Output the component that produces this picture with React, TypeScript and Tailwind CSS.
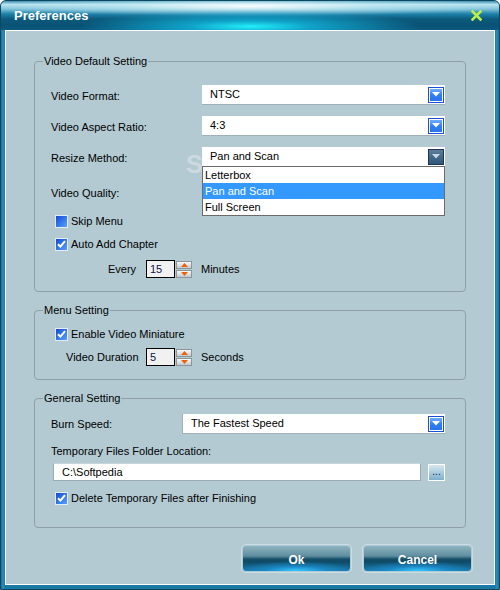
import React from "react";

function Arrow({ pressed }: { pressed?: boolean }) {
  return (
    <div
      className={
        pressed
          ? "mr-[1px] flex h-[16px] w-[16px] items-center justify-center border border-[#1f3552] bg-[linear-gradient(#5a7d9c,#2e5678)]"
          : "mr-[1px] flex h-[16px] w-[16px] items-center justify-center border border-[#1c4fd6] bg-[linear-gradient(#79b4ff,#2f7cf0_55%,#2a72ea)] shadow-[inset_0_0_0_1px_#ffffff]"
      }
    >
      <svg width="8" height="5" viewBox="0 0 8 5">
        <path d="M0 0H8L4 4.5Z" fill={pressed ? "#c9d6e2" : "#ffffff"} />
      </svg>
    </div>
  );
}

function Select({
  value,
  className,
  pressed,
  children,
}: {
  value: string;
  className: string;
  pressed?: boolean;
  children?: React.ReactNode;
}) {
  return (
    <div className={"relative flex h-[20px] items-center bg-white border-b border-[#9fb0b8] " + className}>
      <span className="flex-1 pl-[8px]">{value}</span>
      <Arrow pressed={pressed} />
      {children}
    </div>
  );
}

function Check({ checked }: { checked?: boolean }) {
  return (
    <div className="flex h-[13px] w-[13px] items-center justify-center border border-[#e4ecff] bg-[linear-gradient(135deg,#1848cc,#3a7ff0_60%,#5c9ef6)]">
      {checked && (
        <svg width="9" height="8" viewBox="0 0 9 8">
          <path d="M1 4.2 L3.4 6.6 L8 1.2" stroke="#ffffff" strokeWidth="2" fill="none" />
        </svg>
      )}
    </div>
  );
}

function Spinner({ value }: { value: string }) {
  return (
    <div className="flex items-center">
      <div className="flex h-[18px] w-[29px] items-center border border-black bg-[#f1f1f1] pl-[3px] text-[#141450]">
        {value}
      </div>
      <div className="ml-[1px] flex flex-col gap-[1px]">
        <div className="flex h-[8px] w-[16px] items-center justify-center border border-[#8a969b] bg-[linear-gradient(#f6f8f9,#c2cacd)]">
          <svg width="7" height="4" viewBox="0 0 7 4">
            <path d="M0 4H7L3.5 0Z" fill="#f0600a" />
          </svg>
        </div>
        <div className="flex h-[8px] w-[16px] items-center justify-center border border-[#8a969b] bg-[linear-gradient(#f6f8f9,#c2cacd)]">
          <svg width="7" height="4" viewBox="0 0 7 4">
            <path d="M0 0H7L3.5 4Z" fill="#f0600a" />
          </svg>
        </div>
      </div>
    </div>
  );
}

function GlassButton({ label }: { label: string }) {
  return (
    <div className="flex h-[27px] w-[109px] items-center justify-center rounded-[4px] border border-[#a9ccd8] bg-[radial-gradient(60px_10px_at_50%_100%,#35c8ff_0%,rgba(30,150,220,0.6)_50%,transparent_100%),linear-gradient(#8fb3c0_0%,#5f8ea0_40%,#17506a_52%,#0e4a66_62%,#1a78a8_100%)] pt-[2px] text-[12px] font-bold text-white shadow-[0_0_0_1px_rgba(255,255,255,0.35)]">
      {label}
    </div>
  );
}

export default function App() {
  return (
    <div className="relative flex h-[590px] w-[500px] flex-col overflow-hidden rounded-t-[6px] border border-[#0d4660] bg-[linear-gradient(90deg,#1b6f94,#2d8fb8_2px,#1a7aa3_4px,#1a7aa3_calc(100%-4px),#2d8fb8_calc(100%-2px),#1b6f94)] font-['Liberation_Sans',Arial,sans-serif] text-[11px] text-black">
      {/* Title bar */}
      <div className="relative flex h-[29px] shrink-0 items-center justify-between bg-[radial-gradient(170px_16px_at_50%_88%,#22f0f8_0%,rgba(18,190,230,0.75)_35%,rgba(14,120,170,0)_100%),radial-gradient(260px_10px_at_50%_18%,rgba(255,255,255,0.9)_0%,rgba(200,240,248,0.5)_50%,rgba(255,255,255,0)_100%),linear-gradient(#3a8fb0_0%,#b9e2ee_12%,#7fc2d8_28%,#1d80a8_45%,#0b5a7c_62%,#0a5275_85%,#0b5a80_100%)] px-[13px]">
        <span className="text-[13px] font-bold text-white">Preferences</span>
        <svg width="11" height="11" viewBox="0 0 11 11" className="mr-[4px]">
          <path d="M1.5 1.5 L9.5 9.5 M9.5 1.5 L1.5 9.5" stroke="#b9f04a" strokeWidth="2.6" strokeLinecap="square" />
        </svg>
      </div>

      {/* Body */}
      <div className="relative mx-[4px] mb-[4px] flex flex-1 flex-col border border-white bg-[#b3cad2] px-[28px]">
        {/* watermark */}
        <div className="pointer-events-none absolute left-[180px] top-[115px] text-[25px] font-bold tracking-[1px] text-[rgba(225,233,236,0.55)]">
          SOFTPEDIA
        </div>

        {/* Video Default Setting */}
        <fieldset className="relative z-10 mt-[23px] rounded-[4px] border border-[#8f9fa6] pb-[13px] pl-[16px] pr-[20px]">
          <legend className="-ml-[8px] px-[1px] leading-[14px]">Video Default Setting</legend>
          <div className="mt-[17px] flex h-[20px] items-center justify-between">
            <span className="mt-[3px]">Video Format:</span>
            <Select value="NTSC" className="w-[243px]" />
          </div>
          <div className="mt-[11px] flex h-[20px] items-center justify-between">
            <span className="mt-[3px]">Video Aspect Ratio:</span>
            <Select value="4:3" className="w-[243px]" />
          </div>
          <div className="mt-[11px] flex h-[20px] items-center justify-between">
            <span className="mt-[3px]">Resize Method:</span>
            <Select value="Pan and Scan" className="w-[243px]" pressed>
              <div className="absolute left-0 top-[19px] z-20 w-full border border-[#6b6b6b] bg-white">
                <div className="flex h-[16px] items-center pl-[2px]">Letterbox</div>
                <div className="flex h-[16px] items-center bg-[#3399ff] pl-[2px] text-white">Pan and Scan</div>
                <div className="flex h-[16px] items-center pl-[2px]">Full Screen</div>
              </div>
            </Select>
          </div>
          <div className="mt-[15px] flex h-[20px] items-center">
            <span className="mt-[2px]">Video Quality:</span>
          </div>
          <div className="ml-[4px] mt-[12px] flex h-[14px] items-center gap-[3px]">
            <Check />
            <span>Skip Menu</span>
          </div>
          <div className="ml-[4px] mt-[9px] flex h-[14px] items-center gap-[3px]">
            <Check checked />
            <span>Auto Add Chapter</span>
          </div>
          <div className="ml-[57px] mt-[9px] flex h-[18px] items-center">
            <span className="w-[38px]">Every</span>
            <Spinner value="15" />
            <span className="ml-[9px]">Minutes</span>
          </div>
        </fieldset>

        {/* Menu Setting */}
        <fieldset className="mt-[11px] rounded-[4px] border border-[#8f9fa6] pb-[13px] pl-[16px] pr-[20px]">
          <legend className="-ml-[8px] px-[1px] leading-[14px]">Menu Setting</legend>
          <div className="ml-[4px] mt-[10px] flex h-[14px] items-center gap-[3px]">
            <Check checked />
            <span>Enable Video Miniature</span>
          </div>
          <div className="ml-[15px] mt-[7px] flex h-[18px] items-center">
            <span className="w-[80px]">Video Duration</span>
            <Spinner value="5" />
            <span className="ml-[9px]">Seconds</span>
          </div>
        </fieldset>

        {/* General Setting */}
        <fieldset className="mt-[11px] rounded-[4px] border border-[#8f9fa6] pb-[22px] pl-[16px] pr-[20px]">
          <legend className="-ml-[8px] px-[1px] leading-[14px]">General Setting</legend>
          <div className="mt-[9px] flex h-[20px] items-center justify-between">
            <span className="mt-[1px]">Burn Speed:</span>
            <Select value="The Fastest Speed" className="w-[263px] border-l" />
          </div>
          <div className="mt-[11px] flex h-[13px] items-center">
            <span>Temporary Files Folder Location:</span>
          </div>
          <div className="mt-[5px] flex items-center justify-between">
            <div className="ml-[2px] flex h-[18px] w-[368px] items-center border border-[#9aabb3] border-t-[#c8d6dc] bg-white pl-[8px]">
              C:\Softpedia
            </div>
            <div className="flex h-[17px] w-[17px] items-end justify-center border border-white bg-[linear-gradient(#d6e8f0,#7fb0ca)] pb-[3px] text-[10px] leading-[10px] text-[#10205a]">
              ...
            </div>
          </div>
          <div className="ml-[4px] mt-[10px] flex h-[14px] items-center gap-[3px]">
            <Check checked />
            <span>Delete Temporary Files after Finishing</span>
          </div>
        </fieldset>

        <div className="mr-[-6px] mt-[17px] flex justify-end gap-[12px]">
          <GlassButton label="Ok" />
          <GlassButton label="Cancel" />
        </div>
      </div>
    </div>
  );
}
